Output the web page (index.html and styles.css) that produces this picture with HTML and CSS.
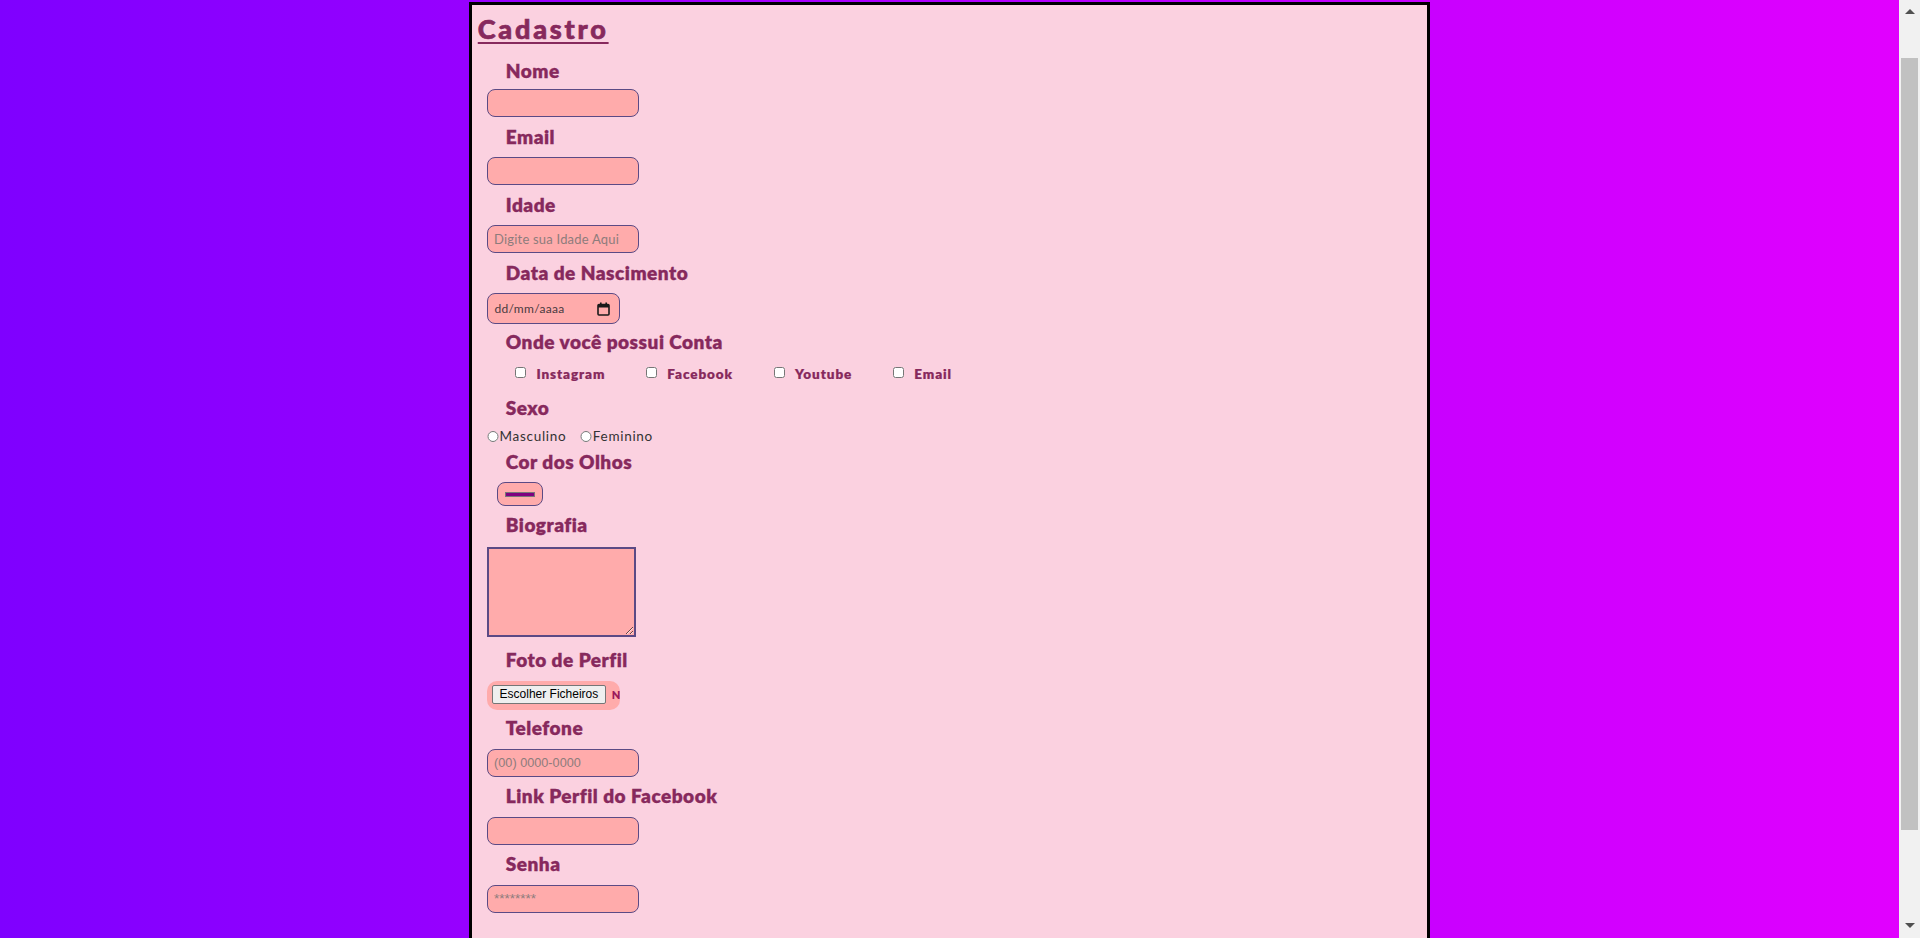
FILE: index.html
```html
<!DOCTYPE html>
<html lang="pt">
<head>
<meta charset="utf-8">
<title>Cadastro</title>
<link rel="stylesheet" href="styles.css">
</head>
<body>
<main class="card">
  <h1 class="title">Cadastro</h1>
  <form class="form">
    <label class="lbl lbl-first" for="nome">Nome</label>
    <input class="field" id="nome" type="text">

    <label class="lbl" for="email">Email</label>
    <input class="field" id="email" type="email">

    <label class="lbl" for="idade">Idade</label>
    <input class="field" id="idade" type="text" inputmode="numeric" placeholder="Digite sua Idade Aqui">

    <span class="lbl">Data de Nascimento</span>
    <div class="date">
      <span class="date-text">dd/mm/aaaa</span>
      <svg class="cal" width="13" height="14" viewBox="0 0 13 14">
        <rect x="1" y="2.5" width="11" height="10.5" rx="1" fill="none" stroke="#1a1a1a" stroke-width="1.6"/>
        <rect x="1" y="2.5" width="11" height="3" fill="#1a1a1a"/>
        <rect x="3" y="0.5" width="1.6" height="3" fill="#1a1a1a"/>
        <rect x="8.4" y="0.5" width="1.6" height="3" fill="#1a1a1a"/>
      </svg>
    </div>

    <span class="lbl">Onde você possui Conta</span>
    <div class="checks">
      <label class="check"><input type="checkbox"><span>Instagram</span></label>
      <label class="check"><input type="checkbox"><span>Facebook</span></label>
      <label class="check"><input type="checkbox"><span>Youtube</span></label>
      <label class="check"><input type="checkbox"><span>Email</span></label>
    </div>

    <span class="lbl">Sexo</span>
    <div class="radios">
      <label class="radio"><input type="radio" name="sexo"><span>Masculino</span></label>
      <label class="radio"><input type="radio" name="sexo"><span>Feminino</span></label>
    </div>

    <span class="lbl">Cor dos Olhos</span>
    <div class="color"><span class="swatch"></span></div>

    <label class="lbl" for="bio">Biografia</label>
    <textarea class="bio" id="bio"></textarea>

    <span class="lbl">Foto de Perfil</span>
    <div class="file">
      <span class="file-btn">Escolher Ficheiros</span>
      <span class="file-name">Nenhum ficheiro selecionado</span>
    </div>

    <label class="lbl" for="tel">Telefone</label>
    <input class="field field-tel" id="tel" type="tel" placeholder="(00) 0000-0000">

    <label class="lbl" for="face">Link Perfil do Facebook</label>
    <input class="field" id="face" type="url">

    <label class="lbl" for="senha">Senha</label>
    <input class="field field-pass" id="senha" type="password" placeholder="********">
  </form>
</main>

<div class="scrollbar" aria-hidden="true">
  <span class="sb-btn sb-up"></span>
  <span class="sb-track"><span class="sb-thumb"></span></span>
  <span class="sb-btn sb-down"></span>
</div>
</body>
</html>
```

FILE: styles.css
```css
body {
  margin: 0;
  padding: 2px 21px 8px 0;
  background: linear-gradient(to right, #7f00ff, #e100ff) 0 0 / calc(100% - 21px) 100% repeat-y;
  background-color: #e100ff;
  font-family: Lato, "Noto Sans", sans-serif;
}

/* window scrollbar (browser chrome in the capture) */
.scrollbar {
  position: fixed;
  top: 0;
  right: 0;
  width: 21px;
  height: 100vh;
  display: flex;
  flex-direction: column;
  background: #f1f1f1;
}
.sb-btn {
  flex: none;
  position: relative;
  height: 21px;
}
.sb-up::before,
.sb-down::before {
  content: "";
  position: absolute;
  left: 6px;
  width: 0;
  height: 0;
  border-left: 5px solid transparent;
  border-right: 5px solid transparent;
}
.sb-up::before {
  top: 9px;
  border-bottom: 5px solid #505050;
}
.sb-down::before {
  top: 6px;
  border-top: 5px solid #505050;
}
.sb-track {
  flex: 1;
  padding: 36.5px 2px 0;
}
.sb-thumb {
  display: block;
  height: 772px;
  background: #c1c1c1;
}

.card {
  width: 50%;
  margin: 0 auto;
  padding: 3px 3px 125px;
  border: 3px solid #000;
  background: #fbd1e0;
}

.title {
  margin: 4.5px 0 0 3px;
  font: 900 27px/32px Lato, sans-serif;
  letter-spacing: 2.8px;
  color: #87295d;
  -webkit-text-stroke: 0.7px #87295d;
  text-decoration: underline;
  text-decoration-thickness: 2px;
  text-underline-offset: 3px;
}

.form {
  display: flex;
  flex-direction: column;
  align-items: flex-start;
}

.lbl {
  display: block;
  margin: 0 0 9.5px;
  padding-left: 31px;
  font: 800 19px/23px Lato, sans-serif;
  letter-spacing: 0.5px;
  color: #87295d;
  -webkit-text-stroke: 0.3px #87295d;
}
.lbl-first {
  margin-top: 14.25px;
  margin-bottom: 7.5px;
}

.field {
  box-sizing: border-box;
  width: 152.4px;
  height: 28px;
  margin: 0 0 7.5px 12.3px;
  padding: 0 6px;
  border: 1px solid #5b4a85;
  border-radius: 8px;
  background: #ffabab;
  font: 13px Lato, sans-serif;
  letter-spacing: 0.2px;
  color: #333;
  outline: none;
}
.field::placeholder {
  color: #8e7c7c;
}
.field-tel {
  font: 12.7px "Liberation Sans", Arial, sans-serif;
  letter-spacing: 0;
}
.field-pass {
  font: 13.5px "Liberation Sans", Arial, sans-serif;
  letter-spacing: 0;
}

.date {
  box-sizing: border-box;
  display: flex;
  align-items: center;
  justify-content: space-between;
  width: 133.4px;
  height: 31px;
  margin: 0 0 6px 12.3px;
  padding: 0 9px 0 6.4px;
  border: 1px solid #5b4a85;
  border-radius: 8px;
  background: #ffabab;
}
.date-text {
  font: 12px Lato, sans-serif;
  letter-spacing: 0.3px;
  color: #4a3a40;
}
.cal {
  display: block;
}

.checks {
  display: flex;
  gap: 41px;
  height: 24px;
  margin: -0.8px 0 10.5px 40.7px;
}
.check {
  display: flex;
  align-items: flex-start;
}
.check input {
  width: 11px;
  height: 11px;
  margin: 5px 10px 0 0;
}
.check span {
  font: 800 13.5px/24px Lato, sans-serif;
  letter-spacing: 0.9px;
  color: #87295d;
  -webkit-text-stroke: 0.2px #87295d;
}

.radios {
  display: flex;
  gap: 14px;
  height: 20px;
  margin: -3px 0 3.8px 12.3px;
}
.radio {
  display: flex;
  align-items: flex-start;
}
.radio input {
  width: 11.5px;
  height: 11.5px;
  margin: 5px 1px 0 0;
}
.radio span {
  font: 400 13.5px/20px Lato, sans-serif;
  letter-spacing: 0.7px;
  color: #333;
}

.color {
  box-sizing: border-box;
  display: flex;
  align-items: center;
  justify-content: center;
  width: 46.4px;
  height: 24px;
  margin: 0 0 6.8px 22.3px;
  border: 1px solid #5b4a85;
  border-radius: 8px;
  background: #ffabab;
}
.swatch {
  box-sizing: border-box;
  width: 30px;
  height: 5px;
  border: 1px solid #777;
  background: #800080;
}

.bio {
  box-sizing: border-box;
  width: 149.4px;
  height: 90px;
  margin: 1px 0 11.4px 12.3px;
  padding: 2px;
  border: 2px solid #5b4a85;
  border-radius: 0;
  background: #ffabab;
  outline: none;
}

.file {
  box-sizing: border-box;
  display: flex;
  align-items: flex-start;
  width: 132.7px;
  height: 29px;
  margin: 0.4px 0 6.5px 12.3px;
  padding: 4px 0 0 5px;
  border-radius: 10px;
  background: #ffabab;
  overflow: hidden;
  white-space: nowrap;
}
.file-btn {
  flex: none;
  box-sizing: border-box;
  height: 19.3px;
  padding: 0 6.5px;
  border: 1px solid #767676;
  border-radius: 2px;
  background: #efefef;
  font: 12px/17px "Liberation Sans", Arial, sans-serif;
  color: #000;
}
.file-name {
  flex: none;
  margin-left: 6px;
  font: 800 11px/19px Lato, sans-serif;
  color: #9b1a5b;
}
```
